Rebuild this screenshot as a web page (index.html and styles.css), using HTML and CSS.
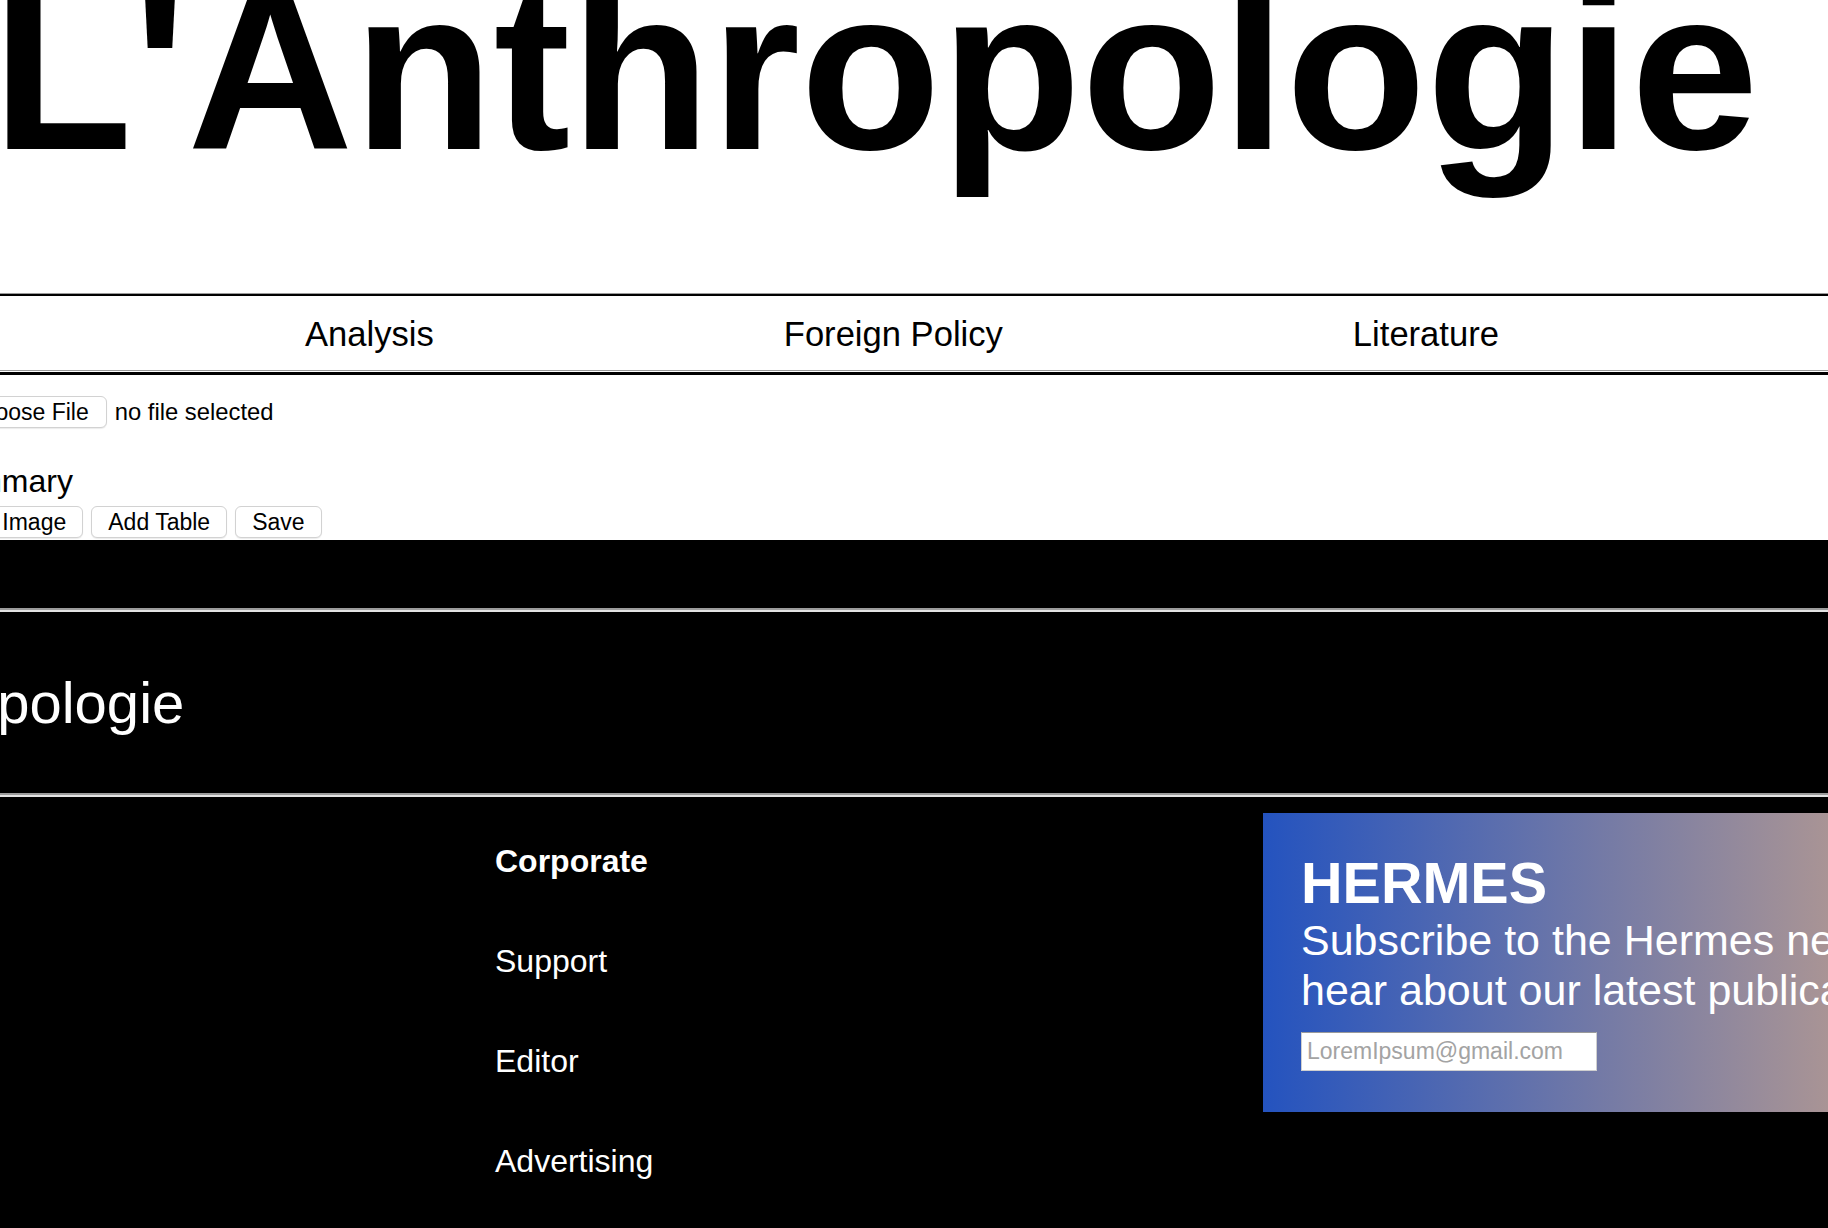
FILE: index.html
```html
<!DOCTYPE html>
<html lang="en">
<head>
<meta charset="utf-8">
<title>L'Anthropologie</title>
<link rel="stylesheet" href="styles.css">
</head>
<body>
<div class="page">
  <header class="masthead">
    <h1 class="brand">L'Anthropologie</h1>
  </header>
  <nav class="topnav">
    <a class="topnav-item" href="#">Analysis</a>
    <a class="topnav-item" href="#">Foreign Policy</a>
    <a class="topnav-item" href="#">Literature</a>
  </nav>
  <section class="editor">
    <div class="file-row">
      <button class="btn file-btn" type="button">Choose File</button>
      <span class="file-status">no file selected</span>
    </div>
    <div class="editor-label">Summary</div>
    <div class="btn-row">
      <button class="btn" type="button">Add Image</button>
      <button class="btn" type="button">Add Table</button>
      <button class="btn" type="button">Save</button>
    </div>
  </section>
  <footer class="footer">
    <div class="rule"></div>
    <div class="footer-brand">L'Anthropologie</div>
    <div class="rule"></div>
    <div class="footer-main">
      <ul class="footer-links">
        <li class="footer-link footer-link-strong">Corporate</li>
        <li class="footer-link">Support</li>
        <li class="footer-link">Editor</li>
        <li class="footer-link">Advertising</li>
      </ul>
      <div class="newsletter">
        <div class="newsletter-title">HERMES</div>
        <p class="newsletter-text">Subscribe to the Hermes newsletter to<br>hear about our latest publications.</p>
        <input class="newsletter-input" type="email" placeholder="LoremIpsum@gmail.com">
      </div>
    </div>
  </footer>
</div>
</body>
</html>
```
FILE: styles.css
```css
html, body {
  margin: 0;
  padding: 0;
}

body {
  font-family: "Liberation Sans", Arial, Helvetica, sans-serif;
  color: #000;
  background: #fff;
  overflow: hidden;
  width: 1828px;
  height: 1228px;
}

.page {
  display: flow-root;
  width: 1828px;
}

.masthead {
  display: flow-root;
}

.brand {
  margin: -45px 0 109px -8px;
  font-size: 230px;
  line-height: 230px;
  font-weight: 700;
  white-space: nowrap;
}

.topnav {
  display: flex;
  gap: 350px;
  padding-left: 305px;
  background: #fff;
  border-top: 2px solid #000;
  border-bottom: 3px solid #000;
  box-shadow: 0 -1px 0 #9a9a9a, inset 0 -1px 0 #fff, inset 0 -2px 0 #9a9a9a;
  white-space: nowrap;
}

.topnav-item {
  font-size: 34.6px;
  line-height: 76px;
  color: #000;
  text-decoration: none;
}

.editor {
  margin-left: -64px;
  padding: 21px 0 2px;
}

.file-row {
  display: flex;
  align-items: center;
  gap: 8px;
  height: 32px;
  margin-left: 12px;
  white-space: nowrap;
}

.btn {
  box-sizing: border-box;
  height: 32px;
  padding: 0 16px;
  border: 1px solid #d2d2d2;
  border-radius: 6px;
  background: #fff;
  color: #000;
  font-family: "Liberation Sans", Arial, Helvetica, sans-serif;
  font-size: 23px;
  line-height: 30px;
  box-shadow: 0 1px 1px rgba(0, 0, 0, 0.08);
  white-space: nowrap;
}

.file-btn {
  padding: 0 17px;
}

.file-status {
  font-size: 23.8px;
}

.editor-label {
  margin-top: 35px;
  font-size: 32px;
  line-height: 37px;
  white-space: nowrap;
}

.btn-row {
  display: flex;
  gap: 8px;
  margin-top: 6px;
  margin-left: 2px;
}

.footer {
  background: #000;
  color: #fff;
  padding-top: 68px;
  height: 620px;
}

.rule {
  height: 0;
  border-top: 2px solid #9b9b9b;
  border-bottom: 2px solid #e3e3e3;
}

.footer-brand {
  margin: 57px 0 57px -217px;
  font-size: 58px;
  line-height: 67px;
  white-space: nowrap;
}

.footer-main {
  display: flex;
  margin-top: 16px;
  padding-left: 495px;
}

.footer-links {
  flex: none;
  width: 768px;
  margin: -2px 0 0;
  padding: 0;
  list-style: none;
}

.footer-link {
  font-size: 32px;
  line-height: 100px;
  white-space: nowrap;
}

.footer-link-strong {
  font-weight: 700;
}

.newsletter {
  flex: none;
  box-sizing: border-box;
  width: 620px;
  height: 299px;
  padding: 38px 0 0 38px;
  background: linear-gradient(90deg, #2453bf 0, #a99495 565px);
  color: #fff;
}

.newsletter-title {
  font-size: 57.5px;
  line-height: 64px;
  font-weight: 700;
  white-space: nowrap;
}

.newsletter-text {
  margin: 0;
  font-size: 43px;
  line-height: 50px;
  white-space: nowrap;
}

.newsletter-input {
  display: block;
  box-sizing: border-box;
  width: 296px;
  height: 39px;
  margin-top: 17px;
  padding: 0 5px;
  border: 1px solid #cfcfcf;
  border-top-color: #9a9a9a;
  background: #fff;
  font-family: "Liberation Sans", Arial, Helvetica, sans-serif;
  font-size: 23px;
  color: #333;
  outline: none;
}

.newsletter-input::placeholder {
  color: #a3a3a3;
}
```
